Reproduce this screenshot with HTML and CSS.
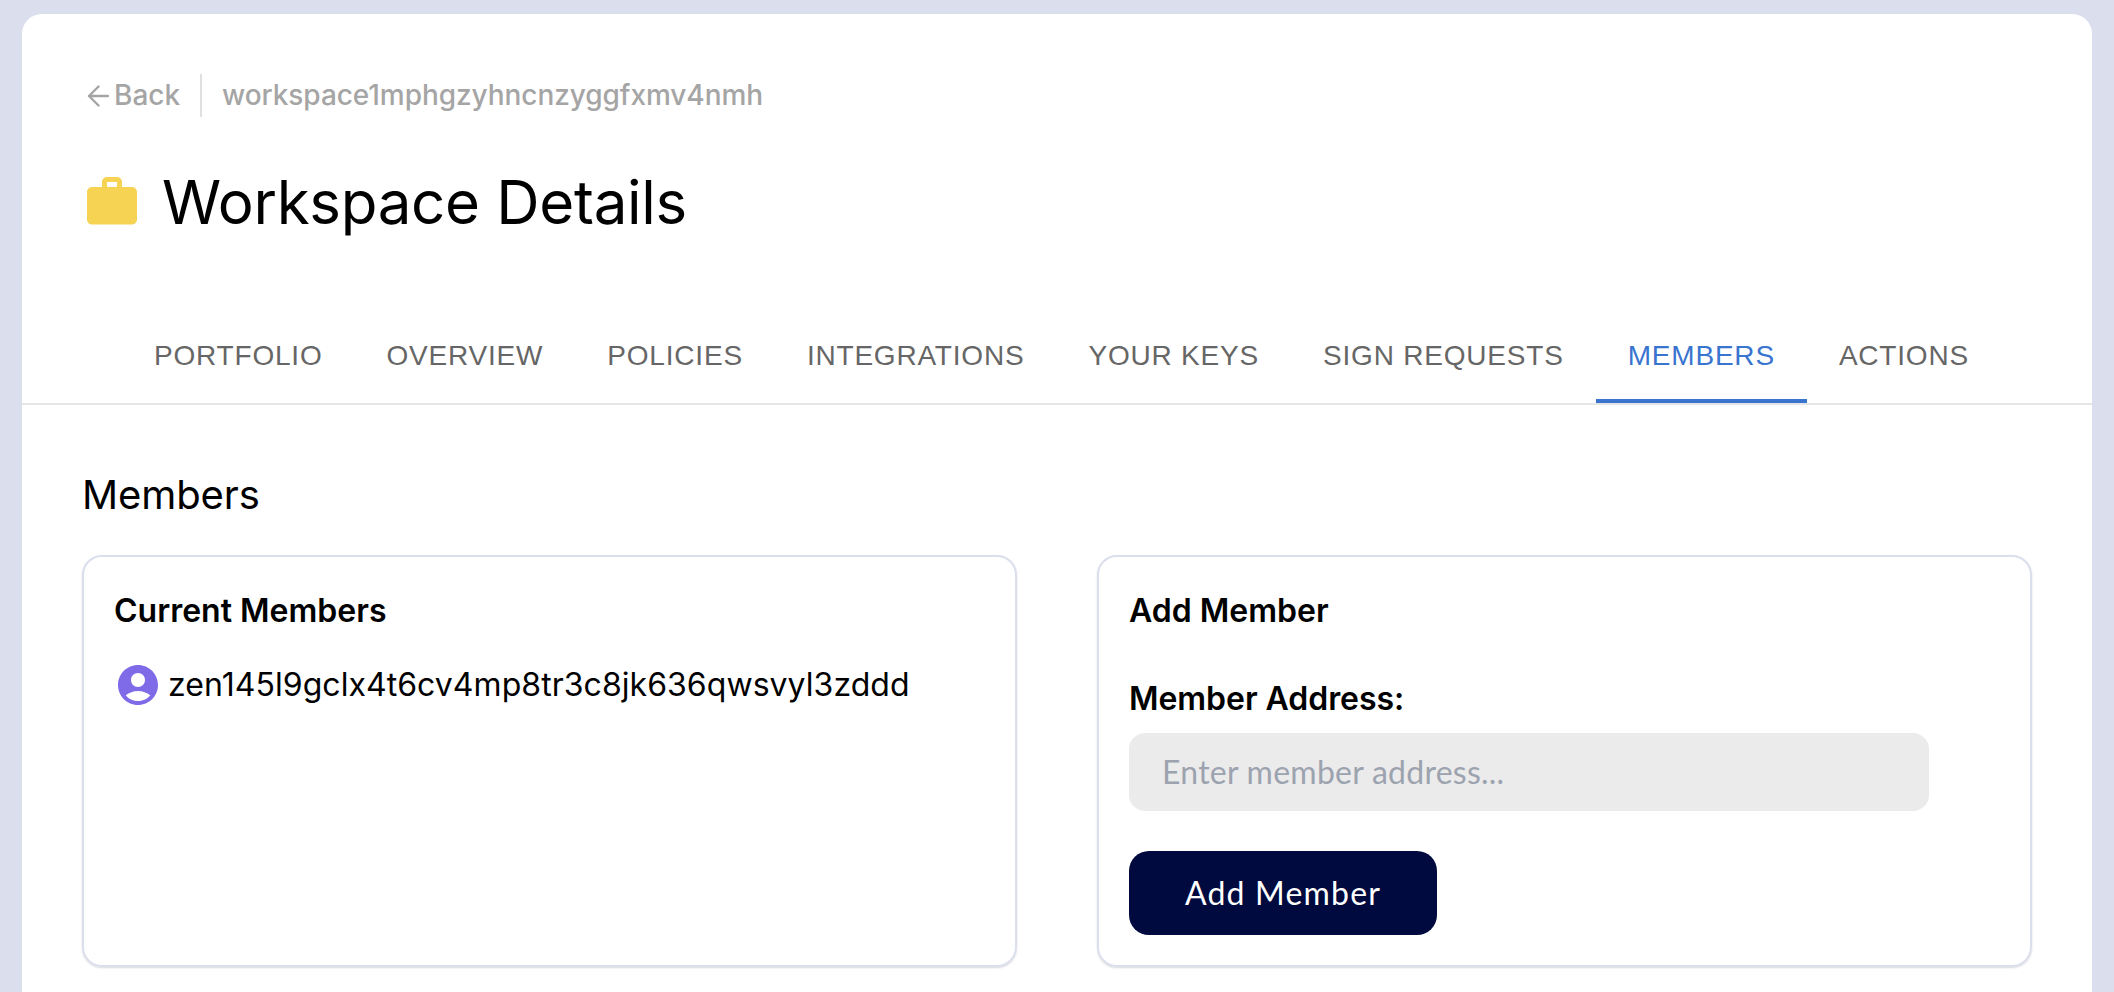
FILE: index.html
```html
<!DOCTYPE html>
<html lang="en">
<head>
<meta charset="utf-8">
<title>Workspace Details</title>
<link rel="stylesheet" href="styles.css">
</head>
<body>
<main class="panel">
  <div class="crumbs">
    <a class="back"><svg class="back-icon" viewBox="0 0 22 22"><path d="M21 11H2M11.5 1.5L2 11l9.500 9.500"/></svg><span>Back</span></a>
    <span class="address">workspace1mphgzyhncnzyggfxmv4nmh</span>
  </div>
  <header class="title">
    <svg class="title-icon" viewBox="0 0 24 24"><path d="M20 6h-4V4c0-1.110-.89-2-2-2h-4c-1.110 0-2 .89-2 2v2H4c-1.110 0-1.990.89-1.990 2L2 19c0 1.110.89 2 2 2h16c1.110 0 2-.89 2-2V8c0-1.110-.89-2-2-2zm-6 0h-4V4h4v2z"/></svg>
    <h1>Workspace Details</h1>
  </header>
  <nav class="tabs">
    <a class="tab">PORTFOLIO</a>
    <a class="tab">OVERVIEW</a>
    <a class="tab">POLICIES</a>
    <a class="tab">INTEGRATIONS</a>
    <a class="tab">YOUR KEYS</a>
    <a class="tab">SIGN REQUESTS</a>
    <a class="tab active">MEMBERS</a>
    <a class="tab">ACTIONS</a>
  </nav>
  <section class="members">
    <h2>Members</h2>
    <div class="cards">
      <article class="card">
        <h3>Current Members</h3>
        <div class="member">
          <svg class="avatar" viewBox="0 0 24 24"><path d="M12 2C6.480 2 2 6.480 2 12s4.480 10 10 10 10-4.480 10-10S17.520 2 12 2zm0 4c1.930 0 3.500 1.570 3.500 3.500S13.930 13 12 13s-3.500-1.570-3.500-3.500S10.070 6 12 6zm0 14c-2.030 0-4.430-.82-6.140-2.880C7.550 15.800 9.680 15 12 15s4.450.8 6.140 2.120C16.430 19.180 14.030 20 12 20z"/></svg>
          <span>zen145l9gclx4t6cv4mp8tr3c8jk636qwsvyl3zddd</span>
        </div>
      </article>
      <article class="card">
        <h3>Add Member</h3>
        <label class="label" for="member">Member Address:</label>
        <input class="input" id="member" placeholder="Enter member address...">
        <button class="button">Add Member</button>
      </article>
    </div>
  </section>
</main>
</body>
</html>
```
FILE: styles.css
```css
* { box-sizing: border-box; }
html { height: 100%; }
body {
  margin: 0;
  height: 100%;
  padding: 14px 22px 0;
  background: #dbdeed;
  font-family: Inter, "Liberation Sans", sans-serif;
  color: #000;
}
h1, h2, h3 { margin: 0; font-weight: 400; }
.panel {
  height: 100%;
  padding-top: 60px;
  background: #fff;
  border-radius: 20px 20px 0 0;
}
.crumbs {
  display: flex;
  height: 43px;
  padding-left: 65px;
  color: #a5a5a5;
  font-size: 28px;
  font-weight: 500;
  line-height: 42px;
}
.back {
  display: flex;
  align-items: flex-start;
  width: 115px;
  gap: 5px;
  border-right: 2px solid #e0e0e0;
}
.back-icon {
  width: 22px;
  height: 22px;
  margin-top: 11px;
  fill: none;
  stroke: #a5a5a5;
  stroke-width: 2.4;
  stroke-linecap: round;
  stroke-linejoin: round;
}
.address { padding-left: 20px; letter-spacing: -0.06px; }
.title {
  display: flex;
  align-items: center;
  gap: 20px;
  margin-top: 55px;
  padding-left: 60px;
}
.title-icon { width: 60px; height: 60px; fill: #f7d354; }
.title h1 { font-size: 60px; line-height: 60px; letter-spacing: -0.3px; }
.tabs {
  display: flex;
  height: 98px;
  margin-top: 75px;
  padding-left: 100px;
  border-bottom: 2px solid #e5e5e5;
}
.tab {
  padding: 0 32px;
  border-bottom: 4px solid transparent;
  color: #666;
  font: 28px/97px "Liberation Sans", Arial, sans-serif;
  letter-spacing: 0.8px;
}
.tab.active { color: #3974cf; border-color: #3974cf; }
.members { padding: 60px 60px 0; }
.members h2 { font-size: 40px; line-height: 60px; letter-spacing: -0.1px; }
.cards {
  display: grid;
  grid-template-columns: 1fr 1fr;
  gap: 80px;
  margin-top: 30px;
}
.card {
  height: 412px;
  padding: 30px;
  border: 2px solid #dbdeed;
  border-radius: 20px;
  box-shadow: 0 1px 2px rgba(0, 0, 0, 0.15);
}
.card h3, .label {
  font-size: 32px;
  line-height: 48px;
  font-weight: 600;
}
.member {
  display: flex;
  align-items: center;
  gap: 6px;
  margin-top: 26px;
  font-size: 32px;
  line-height: 46px;
  letter-spacing: 0.05px;
}
.avatar { width: 48px; height: 48px; fill: #7f6be8; }
.label { display: block; margin-top: 40px; letter-spacing: -0.05px; }
.input {
  display: block;
  width: 800px;
  height: 78px;
  margin-top: 10px;
  padding: 0 33px 2px;
  border: 0;
  border-radius: 16px;
  background: #ebebeb;
  font: 32px Lato, sans-serif;
  letter-spacing: 0.25px;
}
.input::placeholder { color: #9ca3af; opacity: 1; }
.button {
  display: block;
  width: 308px;
  height: 84px;
  margin-top: 40px;
  padding: 0 0 1px;
  border: 0;
  border-radius: 20px;
  background: #010a3e;
  color: #fff;
  font: 32px Lato, sans-serif;
  letter-spacing: 1.2px;
}
```
